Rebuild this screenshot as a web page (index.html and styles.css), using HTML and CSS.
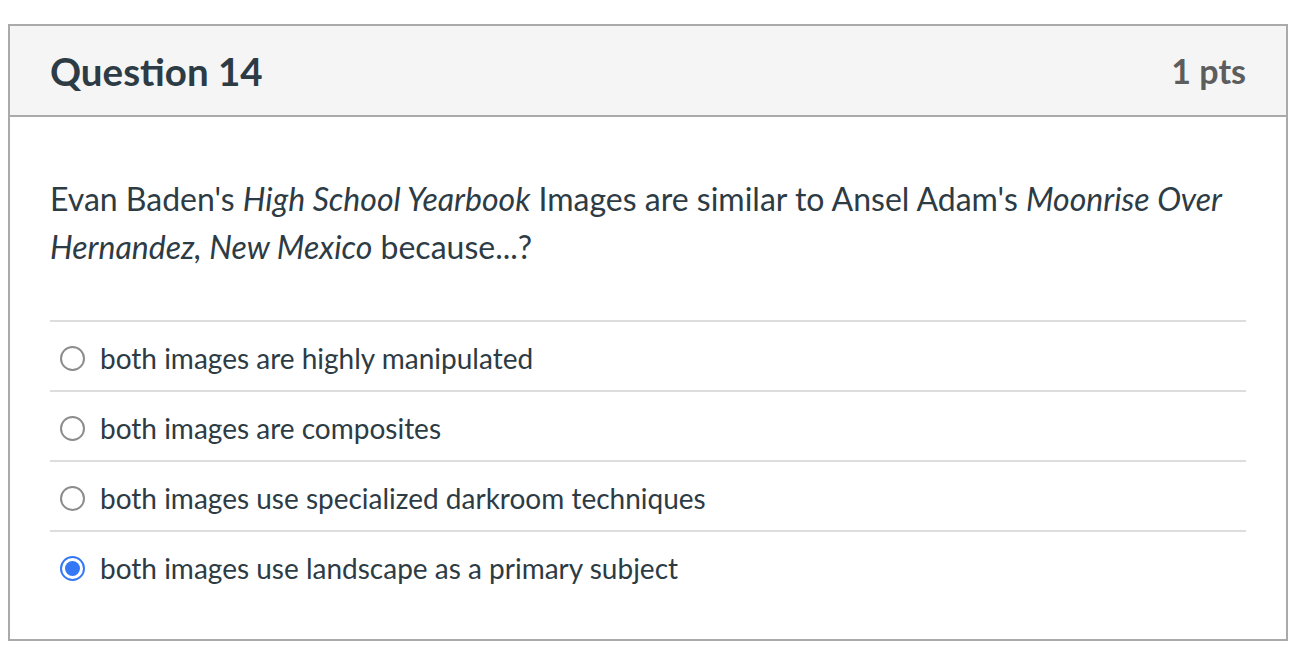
FILE: index.html
```html
<!DOCTYPE html>
<html lang="en">
<head>
<meta charset="utf-8">
<title>Question 14</title>
<link rel="stylesheet" href="styles.css">
</head>
<body>
<div class="question">
  <div class="header">
    <h2 class="title">Question 14</h2>
    <span class="points">1 pts</span>
  </div>
  <div class="content">
    <p class="text">Evan Baden's <em>High School Yearbook</em> Images are similar to Ansel Adam's <em>Moonrise Over Hernandez, New Mexico</em> because...?</p>
    <ul class="answers">
      <li class="answer"><span class="radio"></span><span class="label">both images are highly manipulated</span></li>
      <li class="answer"><span class="radio"></span><span class="label">both images are composites</span></li>
      <li class="answer"><span class="radio"></span><span class="label">both images use specialized darkroom techniques</span></li>
      <li class="answer"><span class="radio checked"></span><span class="label">both images use landscape as a primary subject</span></li>
    </ul>
  </div>
</div>
</body>
</html>
```
FILE: styles.css
```css
html, body {
  margin: 0;
  padding: 0;
  background: #fff;
}
body {
  padding: 24px 16px 0 8px;
  font-family: Lato, "Open Sans", sans-serif;
  color: #2d3b45;
}
.question {
  width: 1276px;
  border: 2px solid #aaaaaa;
}
.header {
  height: 89px;
  background: #f5f5f5;
  border-bottom: 2px solid #aaaaaa;
  display: flex;
  align-items: center;
  justify-content: space-between;
  padding: 0 40px;
}
.title {
  margin: 0;
  font-size: 38.5px;
  font-weight: 700;
  color: #2d3b45;
}
.points {
  font-size: 34px;
  font-weight: 700;
  color: #5d5d5d;
}
.content {
  padding: 58px 40px 39px 40px;
}
.text {
  margin: 0 0 49px 0;
  font-size: 32px;
  line-height: 48px;
}
.answers {
  list-style: none;
  margin: 0;
  padding: 0;
}
.answer {
  display: flex;
  align-items: center;
  border-top: 2px solid #dddddd;
  padding-top: 4px;
  height: 64px;
}
.radio {
  width: 21px;
  height: 21px;
  border: 2px solid #8c8c8c;
  border-radius: 50%;
  margin: 0 15px 0 10px;
  flex: none;
  display: flex;
  align-items: center;
  justify-content: center;
  background: #fff;
}
.radio.checked {
  border-color: #3478f6;
}
.radio.checked::after {
  content: "";
  width: 15px;
  height: 15px;
  border-radius: 50%;
  background: #3478f6;
}
.label {
  font-size: 28px;
}
```
